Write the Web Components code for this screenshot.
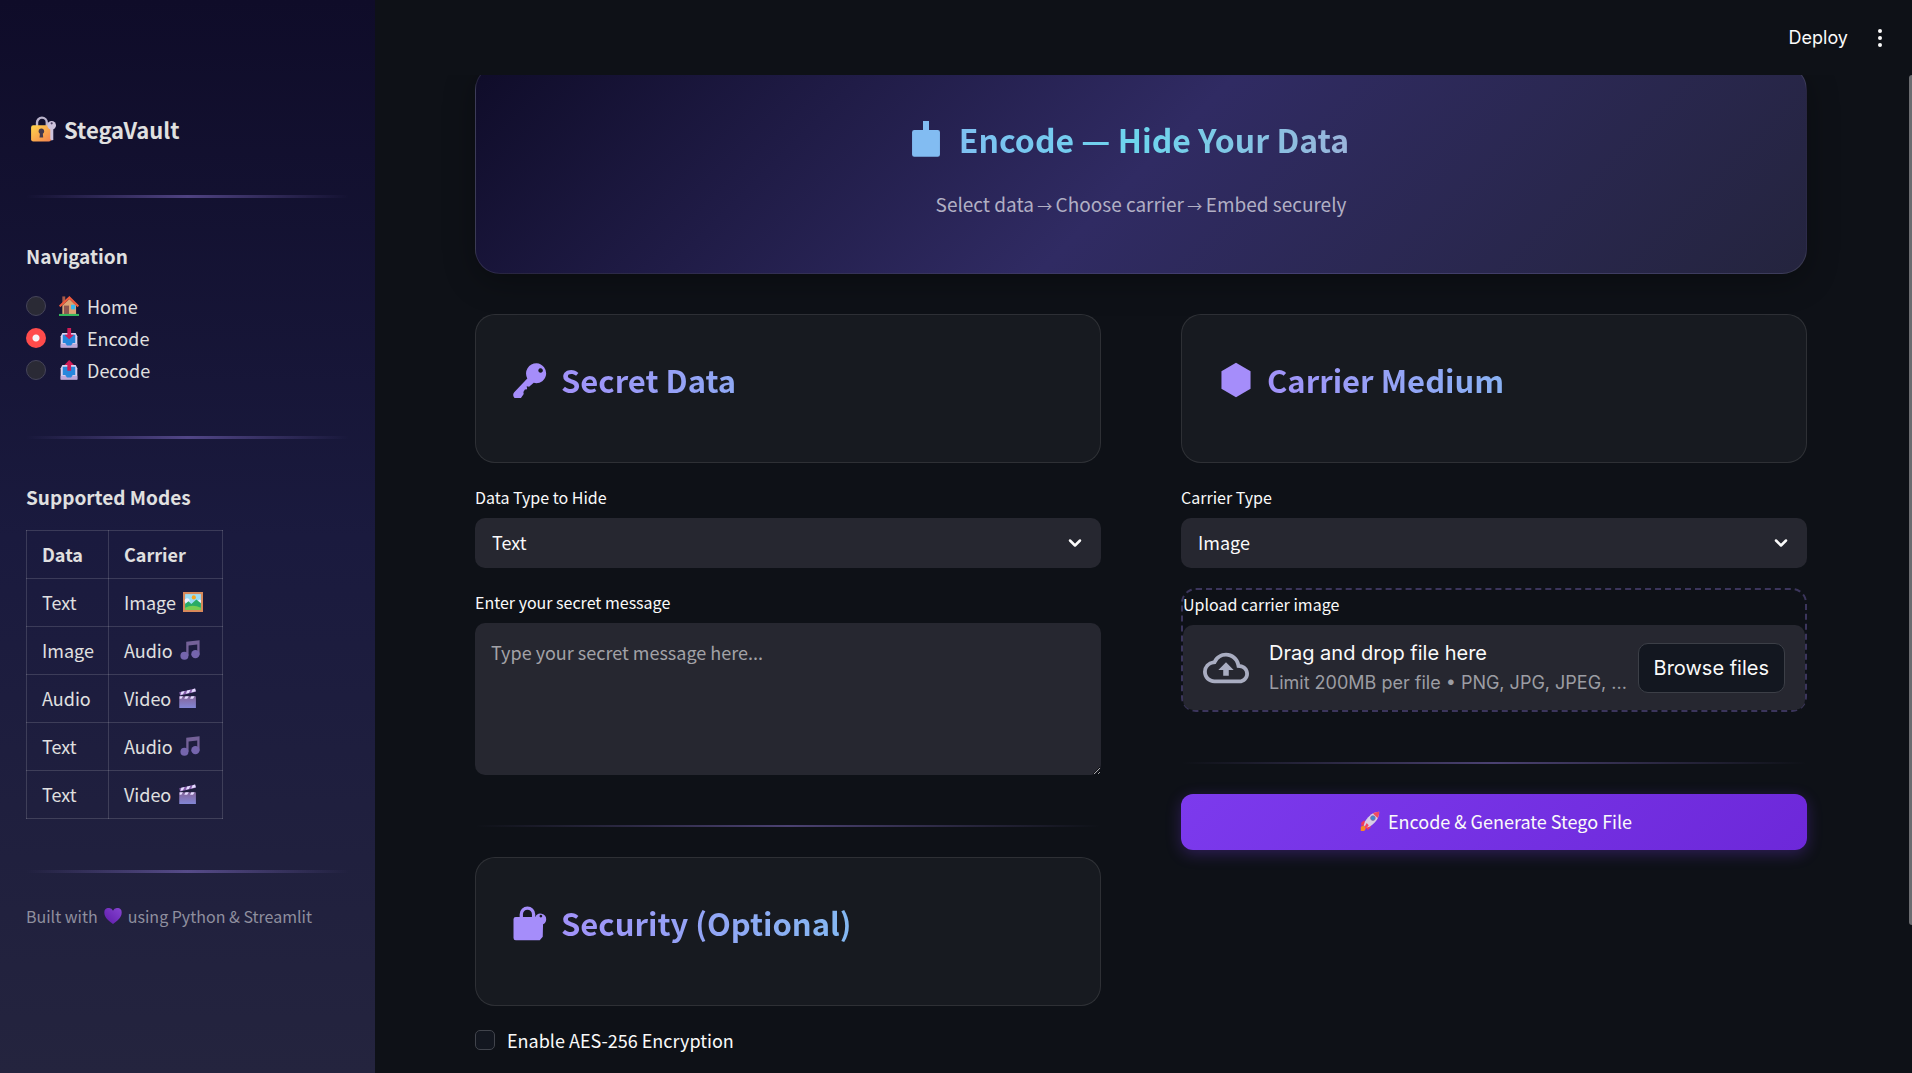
<!DOCTYPE html>
<html lang="en">
<head>
<meta charset="utf-8">
<meta name="viewport" content="width=device-width, initial-scale=1">
<title>StegaVault</title>
<style>
    html, body { margin: 0; height: 100%; }
    body {
        --font-body: "Noto Sans CJK SC", "Noto Sans", sans-serif;
        --font-ui: Inter, "Noto Sans", sans-serif;
        --bg: #0e1117;
        --field: #262730;
        --text: #fafafa;
        background: var(--bg);
        color: var(--text);
        font: 18px/30px var(--font-body);
        overflow: hidden;
    }
</style>
</head>
<body>
<sv-app>
    <sv-sidebar slot="sidebar"></sv-sidebar>
    <sv-topbar slot="topbar"></sv-topbar>
    <sv-hero icon="tray" steps="Select data,Choose carrier,Embed securely">Encode — Hide Your Data</sv-hero>
    <sv-columns>
        <sv-stack slot="left">
            <sv-card icon="key">Secret Data</sv-card>
            <sv-select label="Data Type to Hide" options="Text,Image,Audio"></sv-select>
            <sv-textarea label="Enter your secret message" placeholder="Type your secret message here..."></sv-textarea>
            <sv-divider></sv-divider>
            <sv-card icon="lockflat">Security (Optional)</sv-card>
            <sv-checkbox>Enable AES-256 Encryption</sv-checkbox>
        </sv-stack>
        <sv-stack slot="right">
            <sv-card icon="hexagon">Carrier Medium</sv-card>
            <sv-select label="Carrier Type" options="Image,Audio,Video"></sv-select>
            <sv-uploader label="Upload carrier image" limit="Limit 200MB per file • PNG, JPG, JPEG, ..."></sv-uploader>
            <sv-divider></sv-divider>
            <sv-button icon="rocket">Encode &amp; Generate Stego File</sv-button>
        </sv-stack>
    </sv-columns>
</sv-app>

<script>
(function () {
    const ICONS = {
        lock: `<defs><linearGradient id="g" x1="0" y1="0" x2="1" y2="1"><stop offset="0" stop-color="#ffd54a"/><stop offset="1" stop-color="#f58250"/></linearGradient></defs>
            <path d="M6.500 10V6a4.500 4.500 0 0 1 9 0V10" fill="none" stroke="#b9b2cb" stroke-width="2.200"/>
            <rect x="1" y="8.500" width="18.500" height="15" rx="2" fill="url(#g)"/>
            <circle cx="10.500" cy="14" r="2.500" fill="#44384d"/><path d="M9.300 15h2.400l.5 4.800H8.800z" fill="#44384d"/>
            <path d="M18.700 11h2.800v10.500l-1.300 1.300-1.500-1.500z" fill="#cdc2dc"/>
            <circle cx="20" cy="8.500" r="4" fill="#cdc2dc"/><circle cx="20" cy="6.800" r="1" fill="#4d4266"/>`,
        house: `<path d="M4 .5h3.500V9H4z" fill="#a85a48"/><path d="M4 11.500 12.500 3.500 20.500 11.500V22.500H4z" fill="#dda474"/>
            <path d="M12.500 0 0 11.500 1.500 13.500 12.500 3.500l10 10 1.500-2z" fill="#ef5a3c"/>
            <path d="M6 11.500h6v11H6z" fill="#8d5650"/><path d="M14.500 10.500h5V16h-5z" fill="#35b8f3"/><path d="M0 21.500h24V24H0z" fill="#35b85d"/>`,
        inbox: `<path d="M4 6h16l2 4v13.500H2V10z" fill="#d9d0ee"/><path d="M2 19h20v4.500H2z" fill="#bda8d9"/>
            <path d="M4.500 8h15v10h-3l-2 3h-5l-2-3h-3z" fill="#2687dc"/><path d="M10 0h4.500v8H18l-5.800 5.500L6.500 8H10z" fill="#d01c56"/>`,
        outbox: `<path d="M4 6h16l2 4v13.500H2V10z" fill="#d9d0ee"/><path d="M2 19h20v4.500H2z" fill="#bda8d9"/>
            <path d="M4.500 8h15v10h-3l-2 3h-5l-2-3h-3z" fill="#2687dc"/><path d="M12.200 0 18 6h-3.500v7H10V6H6.500z" fill="#d01c56"/>`,
        picture: `<path d="M0 0h24v24H0z" fill="#d8895a"/><path d="M2.500 2.500h19v19h-19z" fill="#99dcf5"/>
            <circle cx="13" cy="6.500" r="2.500" fill="#f5a51f"/><circle cx="5" cy="10.500" r="3" fill="#e9f0ff"/><path d="m15 12 5-3 1.500 1v3H14z" fill="#e9f0ff"/>
            <path d="m2.500 14.500 4-3.500 3.500 3.500 6-5.500 5.500 4.500v8h-19z" fill="#28ac66"/><path d="M2.500 21.500v-2.500q9-5 19 0v2.500z" fill="#77cd51"/>`,
        music: `<path d="M7.500 2 23.500.3v17h-2.800V5.500L10.300 6.500V19H7.500z" fill="#746198"/><circle cx="5.300" cy="18.800" r="4.800" fill="#7565ad"/><circle cx="18.500" cy="17" r="5" fill="#7565ad"/>`,
        clapper: `<defs><linearGradient id="g" x1="0" y1="0" x2="0" y2="1"><stop offset="0" stop-color="#85659a"/><stop offset="1" stop-color="#8286d5"/></linearGradient></defs>
            <path d="m1.500 5 19-4.500 1 4-19 4.500z" fill="#8861ae"/><path d="m4 4.500 4-1-2 4-3 .8zm7-1.500 4-1-2 4-3.500 1zM17.500 1.400l3-.9.900 3.500-5.500 1.500z" fill="#e5dcff"/>
            <path d="M1.500 10h20v14h-20z" fill="url(#g)"/><path d="M2 10h4l-2 3H2zm7 0h4l-2 3H7.500zm7 0h4l-2 3h-3.500z" fill="#e5dcff"/>`,
        heart: `<defs><linearGradient id="g" x1="1" y1="0" x2="0" y2="1"><stop offset="0" stop-color="#8644d1"/><stop offset="1" stop-color="#5e1baa"/></linearGradient></defs>
            <path d="M12 22.500C3 16.500.5 12 .5 8A6 6 0 0 1 12 5 6 6 0 0 1 23.500 8c0 4-2.500 8.500-11.500 14.500z" fill="url(#g)"/>`,
        rocket: `<path d="M5 11 1.500 14v4l6-2zm8 8.500-4 3.500-1.500-4 4-3z" fill="#ef385a"/><path d="m1 19 4-2 3 3-3 4H1z" fill="#f78b1f"/>
            <path d="M23 1c-7 .5-12 4-17 11.500L4.500 17l3 3 4.500-1.500C20 13 23 8 23 1z" fill="#d8cfe5"/>
            <path d="M23 1c-3 .2-5.400.8-7.500 2l5.500 5.500C22.500 6.500 23 4 23 1z" fill="#ef4b61"/><circle cx="15.500" cy="8.500" r="2.800" fill="#388bd6" stroke="#826d9c"/>
            <path d="m8 14.500 2.500 2.500-4 5-1-3z" fill="#f34563"/>`,
        key: `<path fill="currentColor" fill-rule="evenodd" d="M16.400.8A6.800 6.800 0 0 1 22.600 9c-1 3.800-4.500 5.800-8.100 4.900l-3.100 2.600-1.600-.4.300 2-1.500.2-1 1.700.2 1.300-1.600 2.400c-1.100 1.400-3 1.400-4.300.5-1.300-1.100-1.500-2.700-.4-4L10.200 11A6.900 6.900 0 0 1 16.400.8zm2.300 3.400a1.500 1.500 0 1 0 1.600 2.300 1.500 1.500 0 0 0-1.600-2.300z"/>`,
        hexagon: `<path fill="currentColor" d="m12 .5 9.700 5.700v11.600L12 23.500l-9.700-5.700V6.200z"/>`,
        tray: `<path fill="currentColor" d="M10 0h4v6h5.800q1.500 0 1.500 1.500v14.800q0 1.500-1.500 1.500H4.200q-1.500 0-1.500-1.500V7.500Q2.700 6 4.200 6H10z"/>`,
        lockflat: `<path d="M6.200 9V6.200a4.100 4.100 0 0 1 8.200 0V9" fill="none" stroke="currentColor" stroke-width="2.200"/>
            <path fill="currentColor" fill-rule="evenodd" d="M2.500 8h13a3.800 3.800 0 0 1 7.300 1.500 3.800 3.800 0 0 1-2.100 3.400l-.2 8.300-2 2.300h-16q-1.500 0-1.500-1.500V9.500Q1 8 2.500 8zm16.700-1.500a.9.900 0 1 0 .1 0z"/>`,
        cloud: `<path fill="currentColor" d="M19.350 10.040A7.490 7.490 0 0 0 12 4C9.110 4 6.600 5.640 5.350 8.040A5.994 5.994 0 0 0 0 14c0 3.310 2.690 6 6 6h13c2.760 0 5-2.240 5-5 0-2.640-2.050-4.780-4.650-4.960zM19 18H6c-2.210 0-4-1.790-4-4 0-2.050 1.530-3.760 3.560-3.970l1.070-.11.500-.95A5.469 5.469 0 0 1 12 6c2.620 0 4.880 1.860 5.390 4.430l.3 1.500 1.530.11A2.980 2.980 0 0 1 22 15c0 1.650-1.350 3-3 3zM8 13h2.550v3h2.900v-3H16l-4-4z"/>`,
        chevron: `<path d="m7 9.500 5 5 5-5" fill="none" stroke="currentColor" stroke-width="2.500" stroke-linecap="round" stroke-linejoin="round"/>`,
        dots: `<g fill="currentColor"><circle cx="12" cy="5" r="2"/><circle cx="12" cy="12" r="2"/><circle cx="12" cy="19" r="2"/></g>`
    };

    // Small base class: every element gets an open root with its own markup
    class SVElement extends HTMLElement {
        constructor() {
            super();
            this.attachShadow({ mode: 'open' });
        }
        connectedCallback() {
            const $temp = document.createElement('template');
            $temp.innerHTML = this.render();
            this.shadowRoot.replaceChildren($temp.content.cloneNode(true));
        }
        attr(name) {
            return this.getAttribute(name) || '';
        }
    }

    class SVIcon extends SVElement {
        render() {
            return `
            <style>
                :host { display: inline-block; flex: none; width: 20px; height: 20px; }
                svg { display: block; width: 100%; height: 100%; }
            </style>
            <svg viewBox="0 0 24 24" aria-hidden="true">${ICONS[this.attr('name')]}</svg>`;
        }
    }

    class SVApp extends SVElement {
        render() {
            return `
            <style>
                :host { display: grid; grid-template-columns: 375px 1fr; height: 100vh; }
                .page { position: relative; display: flex; flex-direction: column; min-width: 0; height: 100vh; }
                main { flex: 1; min-height: 0; overflow: hidden; padding: 0 105px 0 100px; }
                .flow { display: flex; flex-direction: column; gap: 40px; margin-top: -10px; }
                .thumb {
                    position: absolute;
                    top: 75px;
                    right: 0;
                    width: 3px;
                    height: 850px;
                    border-radius: 3px 0 0 3px;
                    background: #6b6c70;
                }
            </style>
            <slot name="sidebar"></slot>
            <div class="page">
                <slot name="topbar"></slot>
                <main><div class="flow"><slot></slot></div></main>
                <div class="thumb"></div>
            </div>`;
        }
    }

    class SVDivider extends SVElement {
        render() {
            return `
            <style>
                :host { display: block; padding: var(--divider-space, 30px 0); }
                hr {
                    height: var(--divider-height, 2px);
                    margin: 0;
                    border: 0;
                    background: linear-gradient(90deg, transparent, rgba(167, 139, 250, .4), transparent);
                }
            </style>
            <hr>`;
        }
    }

    class SVSidebar extends SVElement {
        render() {
            const nav = [['Home', 'house'], ['Encode', 'inbox'], ['Decode', 'outbox']];
            const modes = [
                ['Text', 'Image', 'picture'],
                ['Image', 'Audio', 'music'],
                ['Audio', 'Video', 'clapper'],
                ['Text', 'Audio', 'music'],
                ['Text', 'Video', 'clapper']
            ];
            return `
            <style>
                :host {
                    --divider-space: 45px 0 44px;
                    --divider-height: 3px;
                    display: block;
                    box-sizing: border-box;
                    padding: 109px 26px 0;
                    color: #e0e0e0;
                    background: linear-gradient(180deg, #0f0c29, #1a1a3e 50%, #24243e);
                }
                h1, h2 { margin: 0; font-weight: 600; font-size: 19px; line-height: 30px; }
                h1 { display: flex; align-items: center; gap: 8px; padding: 0 0 1px 4px; font-size: 22px; line-height: 40px; }
                h1 sv-icon { width: 26px; height: 26px; }
                h2 { padding-bottom: 2px; line-height: 28px; }
                fieldset { margin: 18px 0 5px; padding: 0; border: 0; }
                fieldset label { display: flex; align-items: center; height: 32px; }
                fieldset sv-icon { margin: 0 8px 0 13px; }
                input {
                    appearance: none;
                    box-sizing: border-box;
                    width: 20px;
                    height: 20px;
                    margin: 0;
                    border: 1px solid #454459;
                    border-radius: 50%;
                    background: #2a2a35;
                }
                input:checked { border: 0; background: radial-gradient(circle, #f5f3f5 3px, #ff4b4b 4px); }
                table { margin: 17px 0 6px; border-collapse: collapse; }
                th, td {
                    height: 45px;
                    padding: 0 14px 2px 15px;
                    border: 1px solid rgba(250, 250, 250, .15);
                    text-align: left;
                    vertical-align: middle;
                }
                th:last-child, td:last-child { padding-right: 19px; }
                td span { display: flex; align-items: center; gap: 7px; }
                p {
                    display: flex;
                    align-items: center;
                    margin: -14px 0 0;
                    color: #8f8f9e;
                    font-size: 16px;
                    line-height: 26px;
                    white-space: nowrap;
                }
                p sv-icon { width: 18px; height: 18px; margin: 0 6px; }
            </style>
            <h1><sv-icon name="lock"></sv-icon>StegaVault</h1>
            <sv-divider></sv-divider>
            <h2 id="nav">Navigation</h2>
            <fieldset aria-labelledby="nav">
                ${nav.map(([label, icon]) => `<label><input type="radio" name="page" value="${label}"${label === 'Encode' ? ' checked' : ''}><sv-icon name="${icon}"></sv-icon>${label}</label>`).join('')}
            </fieldset>
            <sv-divider></sv-divider>
            <h2>Supported Modes</h2>
            <table>
                <thead><tr><th>Data</th><th>Carrier</th></tr></thead>
                <tbody>
                    ${modes.map(([data, carrier, icon]) => `<tr><td>${data}</td><td><span>${carrier}<sv-icon name="${icon}"></sv-icon></span></td></tr>`).join('')}
                </tbody>
            </table>
            <sv-divider></sv-divider>
            <p>Built with<sv-icon name="heart"></sv-icon>using Python &amp; Streamlit</p>`;
        }
    }

    class SVTopbar extends SVElement {
        render() {
            return `
            <style>
                :host {
                    position: relative;
                    z-index: 1;
                    display: flex;
                    flex: none;
                    align-items: center;
                    justify-content: flex-end;
                    gap: 20px;
                    height: 75px;
                    padding-right: 20px;
                    background: var(--bg);
                }
                button { padding: 0; border: 0; color: inherit; background: none; font: 18px/24px var(--font-ui); }
                sv-icon { display: block; width: 24px; height: 24px; }
            </style>
            <button type="button">Deploy</button>
            <button type="button" aria-label="Main menu"><sv-icon name="dots"></sv-icon></button>`;
        }
    }

    class SVHero extends SVElement {
        render() {
            return `
            <style>
                :host {
                    display: block;
                    box-sizing: border-box;
                    min-height: 209px;
                    padding: 49px 40px 0;
                    border: 1px solid rgba(255, 255, 255, .1);
                    border-radius: 25px;
                    background: linear-gradient(135deg, #0f0c29, #302b63 50%, #24243e);
                    box-shadow: 0 8px 32px rgba(0, 0, 0, .3);
                    text-align: center;
                }
                h1 {
                    display: flex;
                    align-items: center;
                    justify-content: center;
                    gap: 15px;
                    margin: 0;
                    padding-right: 25px;
                    color: transparent;
                    background: linear-gradient(90deg, #a78bfa, #6dd5ed 50%, #f472b6);
                    background-clip: text;
                    -webkit-background-clip: text;
                    font-size: 32px;
                    font-weight: 700;
                    line-height: 48px;
                }
                sv-icon { width: 36px; height: 36px; color: #82bcf2; }
                p { margin: 26px 0 0; color: #b1afc4; line-height: 30px; font-size: 19px; }
                p span { font-size: 15px; }
            </style>
            <h1><sv-icon name="${this.attr('icon')}"></sv-icon><slot></slot></h1>
            <p>${this.attr('steps').split(',').join('<span> → </span>')}</p>`;
        }
    }

    class SVColumns extends SVElement {
        render() {
            return `
            <style>
                :host { display: grid; grid-template-columns: 1fr 1fr; gap: 80px; align-items: start; }
            </style>
            <slot name="left"></slot>
            <slot name="right"></slot>`;
        }
    }

    class SVStack extends SVElement {
        render() {
            return `
            <style>
                :host { display: flex; flex-direction: column; gap: 20px; min-width: 0; }
                ::slotted(sv-divider) { margin-bottom: -20px; }
            </style>
            <slot></slot>`;
        }
    }

    class SVCard extends SVElement {
        render() {
            return `
            <style>
                :host {
                    display: block;
                    box-sizing: border-box;
                    min-height: 149px;
                    padding: 41px 32px 0;
                    border: 1px solid rgba(255, 255, 255, .1);
                    border-radius: 20px;
                    background: rgba(255, 255, 255, .04);
                }
                h2 {
                    display: flex;
                    align-items: center;
                    gap: 13px;
                    margin: 0;
                    padding-left: 4px;
                    color: transparent;
                    background: linear-gradient(90deg, #a78bfa, #6dd5ed);
                    background-clip: text;
                    -webkit-background-clip: text;
                    font-size: 31px;
                    font-weight: 700;
                    line-height: 48px;
                }
                sv-icon { width: 36px; height: 36px; color: #a58dfa; }
            </style>
            <h2><sv-icon name="${this.attr('icon')}"></sv-icon><slot></slot></h2>`;
        }
    }

    const FIELD_CSS = `
        :host { display: block; }
        label { display: block; margin-bottom: 5px; padding-bottom: 2px; font-size: 16px; line-height: 28px; }
    `;

    class SVSelect extends SVElement {
        render() {
            return `
            <style>
                ${FIELD_CSS}
                .box { display: grid; align-items: center; }
                select, sv-icon { grid-area: 1 / 1; }
                select {
                    appearance: none;
                    width: 100%;
                    height: 50px;
                    padding: 0 50px 2px 17px;
                    border: 0;
                    border-radius: 10px;
                    color: inherit;
                    background: var(--field);
                    font: inherit;
                }
                sv-icon { justify-self: end; width: 24px; height: 24px; margin-right: 14px; pointer-events: none; }
            </style>
            <label for="field">${this.attr('label')}</label>
            <div class="box">
                <select id="field">${this.attr('options').split(',').map(o => `<option>${o}</option>`).join('')}</select>
                <sv-icon name="chevron"></sv-icon>
            </div>`;
        }
    }

    class SVTextarea extends SVElement {
        render() {
            return `
            <style>
                ${FIELD_CSS}
                textarea {
                    display: block;
                    box-sizing: border-box;
                    width: 100%;
                    height: 152px;
                    padding: 14px 16px;
                    border: 0;
                    border-radius: 10px;
                    color: inherit;
                    background: var(--field);
                    font: inherit;
                    resize: vertical;
                }
                textarea::placeholder { color: #a2a2a7; }
            </style>
            <label for="field">${this.attr('label')}</label>
            <textarea id="field" placeholder="${this.attr('placeholder')}"></textarea>`;
        }
    }

    class SVCheckbox extends SVElement {
        render() {
            return `
            <style>
                :host { display: block; }
                label { display: flex; align-items: center; gap: 12px; padding-bottom: 2px; line-height: 28px; }
                input {
                    appearance: none;
                    box-sizing: border-box;
                    width: 20px;
                    height: 20px;
                    margin: 0;
                    border: 1px solid #41444c;
                    border-radius: 5px;
                    background: #131720;
                }
            </style>
            <label><input type="checkbox"><slot></slot></label>`;
        }
    }

    class SVUploader extends SVElement {
        render() {
            return `
            <style>
                ${FIELD_CSS}
                :host { border: 2px dashed rgba(167, 139, 250, .3); border-radius: 15px; }
                .zone {
                    display: flex;
                    align-items: center;
                    box-sizing: border-box;
                    height: 85px;
                    padding: 0 20px;
                    border-radius: 10px;
                    background: var(--field);
                    font-family: var(--font-ui);
                }
                sv-icon { width: 46px; height: 46px; margin-right: 20px; color: #a9adc1; }
                .text { flex: 1; min-width: 0; font-size: 20px; line-height: 30px; }
                small {
                    display: block;
                    color: #9c9da3;
                    font-size: 18px;
                    white-space: nowrap;
                }
                button {
                    flex: none;
                    height: 50px;
                    margin-left: 12px;
                    padding: 0 15px;
                    border: 1px solid #3c3f47;
                    border-radius: 10px;
                    color: inherit;
                    background: #131720;
                    font: 20px/30px var(--font-ui);
                }
            </style>
            <label id="label" for="browse">${this.attr('label')}</label>
            <div class="zone" role="group" aria-labelledby="label">
                <sv-icon name="cloud"></sv-icon>
                <div class="text">Drag and drop file here<small>${this.attr('limit')}</small></div>
                <button type="button" id="browse">Browse files</button>
            </div>`;
        }
    }

    class SVButton extends SVElement {
        render() {
            return `
            <style>
                :host { display: block; }
                button {
                    display: flex;
                    align-items: center;
                    justify-content: center;
                    gap: 8px;
                    width: 100%;
                    height: 56px;
                    padding: 0 0 2px 4px;
                    border: 0;
                    border-radius: 12px;
                    color: inherit;
                    background: linear-gradient(135deg, #7c3aed, #6d28d9);
                    box-shadow: 0 4px 15px rgba(124, 58, 237, .3);
                    font: inherit;
                }
            </style>
            <button type="button"><sv-icon name="${this.attr('icon')}"></sv-icon><slot></slot></button>`;
        }
    }

    customElements.define('sv-icon', SVIcon);
    customElements.define('sv-app', SVApp);
    customElements.define('sv-divider', SVDivider);
    customElements.define('sv-sidebar', SVSidebar);
    customElements.define('sv-topbar', SVTopbar);
    customElements.define('sv-hero', SVHero);
    customElements.define('sv-columns', SVColumns);
    customElements.define('sv-stack', SVStack);
    customElements.define('sv-card', SVCard);
    customElements.define('sv-select', SVSelect);
    customElements.define('sv-textarea', SVTextarea);
    customElements.define('sv-checkbox', SVCheckbox);
    customElements.define('sv-uploader', SVUploader);
    customElements.define('sv-button', SVButton);
})();
</script>
</body>
</html>
